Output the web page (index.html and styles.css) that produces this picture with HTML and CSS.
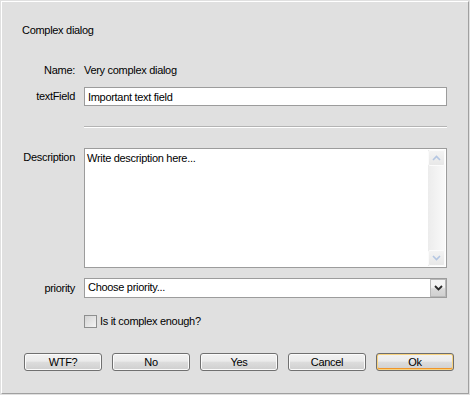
FILE: index.html
```html
<!DOCTYPE html>
<html lang="en">

<head>
  <meta charset="UTF-8">
  <meta name="viewport" content="width=device-width, initial-scale=1.0">
  <title>Complex dialog</title>
  <link rel="stylesheet" href="styles.css">
</head>

<body>
  <div class="dialog">
    <div class="title">Complex dialog</div>

    <div class="row row-name">
      <div class="label">Name:</div>
      <div class="value">Very complex dialog</div>
    </div>

    <div class="row row-field">
      <label class="label" for="textField">textField</label>
      <input class="field" id="textField" type="text" value="Important text field">
    </div>

    <div class="row row-sep">
      <div></div>
      <div class="separator"></div>
    </div>

    <div class="row row-desc">
      <div class="label label-top">Description</div>
      <div class="memo">
        <div class="memo-text">Write description here...</div>
        <div class="vscroll">
          <div class="vscroll-btn">
            <svg width="9" height="6" viewBox="0 0 9 6"><path d="M1 5 L4.5 1.5 L8 5" fill="none" stroke="#b4c6e2" stroke-width="1.6"/></svg>
          </div>
          <div class="vscroll-track"></div>
          <div class="vscroll-btn">
            <svg width="9" height="6" viewBox="0 0 9 6"><path d="M1 1 L4.5 4.5 L8 1" fill="none" stroke="#b4c6e2" stroke-width="1.6"/></svg>
          </div>
        </div>
      </div>
    </div>

    <div class="row row-combo">
      <div class="label">priority</div>
      <div class="combo">
        <div class="combo-text">Choose priority...</div>
        <div class="combo-btn">
          <svg width="9" height="6" viewBox="0 0 9 6"><path d="M1 1 L4.5 4.5 L8 1" fill="none" stroke="#2a2a2a" stroke-width="1.8"/></svg>
        </div>
      </div>
    </div>

    <div class="row row-check">
      <div></div>
      <label class="check">
        <input type="checkbox" class="checkbox">
        <span>Is it complex enough?</span>
      </label>
    </div>

    <div class="buttons">
      <button class="btn">WTF?</button>
      <button class="btn">No</button>
      <button class="btn">Yes</button>
      <button class="btn">Cancel</button>
      <button class="btn btn-default">Ok</button>
    </div>
  </div>
</body>

</html>
```

FILE: styles.css
```css
body {
  margin: 0;
  width: 470px;
  height: 395px;
  overflow: hidden;
  background: #e0e0e0;
  font-family: 'Liberation Sans', Arial, sans-serif;
  font-size: 11px;
  letter-spacing: -0.3px;
  color: #000;
}

.dialog {
  box-sizing: border-box;
  margin: 1px 0 0 1px;
  width: 468px;
  height: 393px;
  background: #e0e0e0;
  border: 1px solid;
  border-color: #fff #a0a0a0 #a0a0a0 #fff;
}

.title {
  margin: 22px 0 0 20px;
  line-height: 13px;
}

.row {
  display: grid;
  grid-template-columns: 73px 363px;
  column-gap: 9px;
  align-items: center;
  line-height: 13px;
}

.label {
  text-align: right;
}

.label-top {
  align-self: start;
  padding-top: 3px;
}

.row-name {
  margin-top: 27px;
}

.row-field {
  margin-top: 10px;
}

.field {
  box-sizing: border-box;
  height: 19px;
  width: 100%;
  margin: 0;
  padding: 0 3px;
  border: 1px solid #9c9c9c;
  background: #fff;
  font: inherit;
  letter-spacing: inherit;
  color: #000;
  outline: none;
}

.row-sep {
  margin-top: 20px;
}

.separator {
  height: 1px;
  background: #b4b4b4;
  border-bottom: 1px solid #fff;
}

.row-desc {
  margin-top: 20px;
}

.memo {
  box-sizing: border-box;
  height: 120px;
  display: flex;
  border: 1px solid #9c9c9c;
  background: #fff;
}

.memo-text {
  flex: 1;
  padding: 3px 2px;
}

.vscroll {
  width: 17px;
  margin: 1px 1px 1px 0;
  display: flex;
  flex-direction: column;
  background: linear-gradient(to right, #ececec, #f9f9f9);
}

.vscroll-btn {
  box-sizing: border-box;
  height: 16px;
  display: flex;
  justify-content: center;
  align-items: center;
  border: 1px solid #fbfbfb;
  border-radius: 2px;
  background: linear-gradient(#f3f3f3, #e8e8e8);
}

.vscroll-track {
  flex: 1;
}

.row-combo {
  margin-top: 10px;
}

.combo {
  box-sizing: border-box;
  height: 20px;
  display: flex;
  border: 1px solid #9c9c9c;
  background: #fff;
}

.combo-text {
  flex: 1;
  padding: 2px 3px 0;
}

.combo-btn {
  box-sizing: border-box;
  width: 16px;
  display: flex;
  justify-content: center;
  align-items: center;
  border: 1px solid #b8b8b8;
  background: linear-gradient(#f4f4f4 45%, #dadada 55%, #d0d0d0);
}

.row-check {
  margin-top: 17px;
}

.check {
  display: flex;
  align-items: center;
  gap: 3px;
}

.checkbox {
  appearance: none;
  box-sizing: border-box;
  width: 13px;
  height: 13px;
  margin: 0;
  border: 1px solid #8e8f8f;
  background: linear-gradient(135deg, #d4d4d4, #f4f4f4);
}

.buttons {
  display: flex;
  gap: 10px;
  margin: 25px 0 0 22px;
}

.btn {
  box-sizing: border-box;
  width: 78px;
  height: 18px;
  margin: 0;
  padding: 0;
  border: 1px solid #707070;
  border-radius: 3px;
  background: linear-gradient(#f2f2f2, #ebebeb 45%, #dddddd 50%, #cfcfcf);
  box-shadow: inset 0 0 0 1px #fbfbfb;
  font: inherit;
  letter-spacing: inherit;
  color: #000;
}

.btn-default {
  border-color: #6d6d6d;
  box-shadow: inset 0 0 0 1px #f8d37f, inset 0 -1px 0 1px #f0962a;
}
```
